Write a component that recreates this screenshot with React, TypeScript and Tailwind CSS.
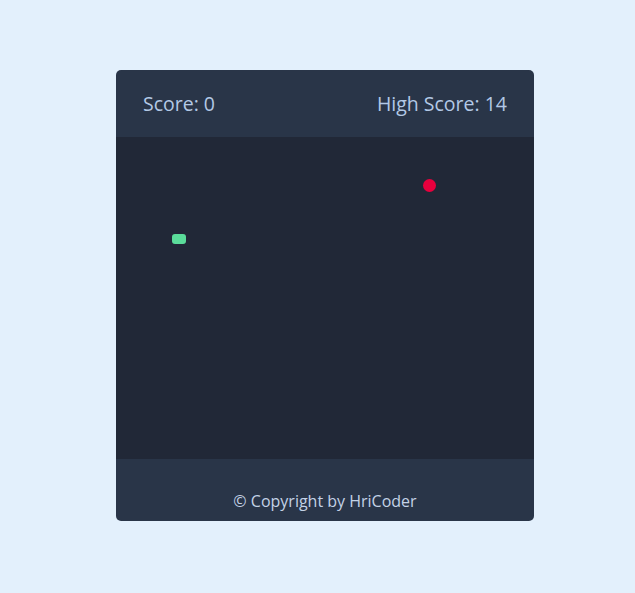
export default function App() {
  const font = { fontFamily: '"Open Sans", "Noto Sans", sans-serif' };
  return (
    <div
      className="min-h-screen w-full bg-[#e3f0fc] pl-[116px] pt-[70px]"
      style={font}
    >
      <div className="w-[418px] overflow-hidden rounded-[5px] bg-[#293548]">
        {/* Header */}
        <div className="flex h-[67px] items-center justify-between px-[27px] pt-[1px] text-[19.5px] text-[#b3c9e6]">
          <span>Score: 0</span>
          <span>High Score: 14</span>
        </div>

        {/* Board */}
        <div className="relative h-[322px] bg-[#212837]">
          <div className="absolute left-[307px] top-[42px] h-[13px] w-[13px] rounded-full bg-[#e8003d]" />
          <div className="absolute left-[56px] top-[97px] h-[10px] w-[14px] rounded-[3px] bg-[#5adc9a]" />
        </div>

        {/* Footer */}
        <div className="flex h-[62px] items-end justify-center pb-[8px] text-[16px] text-[#c3d2e6]">
          © Copyright by HriCoder
        </div>
      </div>
    </div>
  );
}
